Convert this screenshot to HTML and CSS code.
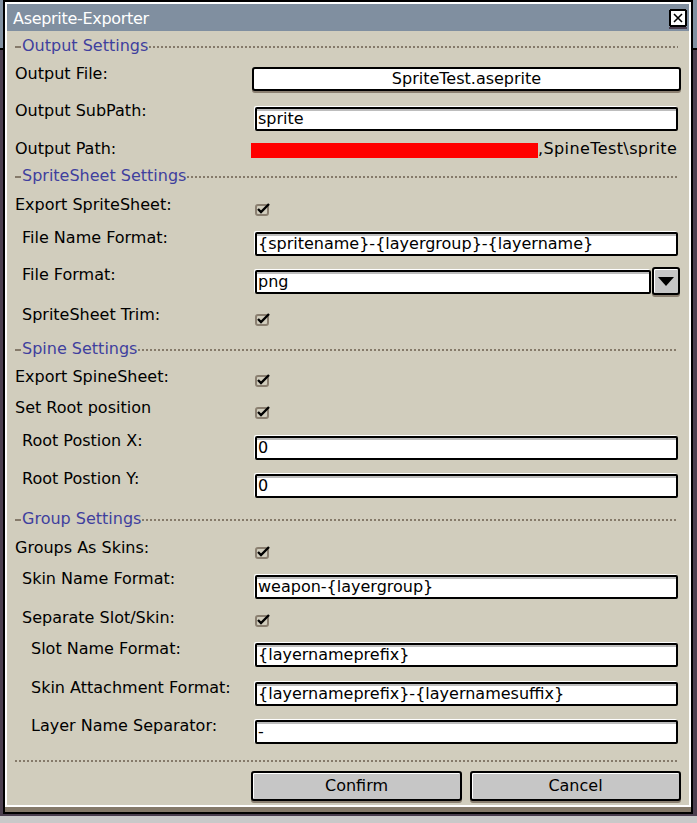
FILE: index.html
```html
<!DOCTYPE html>
<html>
<head>
<meta charset="utf-8">
<title>Aseprite-Exporter</title>
<link rel="stylesheet" href="styles.css">
</head>
<body>
<div class="window">
  <div class="inner">
    <div class="titlebar">
      <span class="title">Aseprite-Exporter</span>
      <span class="close">
        <svg width="18" height="20" viewBox="0 0 18 20" shape-rendering="crispEdges">
          <rect x="0" y="18" width="18" height="2" fill="#4b3f4f"/>
          <rect x="1" y="1" width="16" height="16" rx="2" fill="#fff" stroke="#000" stroke-width="2"/>
          <path d="M5 5 L13 13 M13 5 L5 13" stroke="#000" stroke-width="1.6" shape-rendering="auto"/>
        </svg>
      </span>
    </div>
    <div class="content">
      <div class="form">
        <div class="sep"><span class="dash lead"></span><span class="sep-text">Output Settings</span><span class="dash fill"></span></div>

        <div class="label">Output File:</div>
        <div class="ctl"><div class="filebtn">SpriteTest.aseprite</div></div>

        <div class="label">Output SubPath:</div>
        <div class="ctl"><div class="entry mt4">sprite</div></div>

        <div class="label">Output Path:</div>
        <div class="ctl"><div class="pathrow"><span class="redact"></span><span class="pathtext">,SpineTest\sprite</span></div></div>

        <div class="sep"><span class="dash lead"></span><span class="sep-text">SpriteSheet Settings</span><span class="dash fill"></span></div>

        <div class="label">Export SpriteSheet:</div>
        <div class="ctl"><span class="cb mt5"><svg width="17" height="15" viewBox="0 0 17 15"><rect x="1" y="3" width="12" height="10" rx="2" fill="none" stroke="#8a7f70" stroke-width="2"/><polyline points="3,7 6,10 14,2" fill="none" stroke="#000" stroke-width="2.4"/></svg></span></div>

        <div class="label l1">File Name Format:</div>
        <div class="ctl"><div class="entry mt2">{spritename}-{layergroup}-{layername}</div></div>

        <div class="label l1">File Format:</div>
        <div class="ctl"><div class="combo"><div class="entry mt3 combo-entry">png</div><div class="dd"><svg width="16" height="9" viewBox="0 0 16 9"><polygon points="0,0 16,0 8,9" fill="#000"/></svg></div></div></div>

        <div class="label l1">SpriteSheet Trim:</div>
        <div class="ctl"><span class="cb mt5"><svg width="17" height="15" viewBox="0 0 17 15"><rect x="1" y="3" width="12" height="10" rx="2" fill="none" stroke="#8a7f70" stroke-width="2"/><polyline points="3,7 6,10 14,2" fill="none" stroke="#000" stroke-width="2.4"/></svg></span></div>

        <div class="sep"><span class="dash lead"></span><span class="sep-text">Spine Settings</span><span class="dash fill"></span></div>

        <div class="label">Export SpineSheet:</div>
        <div class="ctl"><span class="cb mt4"><svg width="17" height="15" viewBox="0 0 17 15"><rect x="1" y="3" width="12" height="10" rx="2" fill="none" stroke="#8a7f70" stroke-width="2"/><polyline points="3,7 6,10 14,2" fill="none" stroke="#000" stroke-width="2.4"/></svg></span></div>

        <div class="label">Set Root position</div>
        <div class="ctl"><span class="cb mt5"><svg width="17" height="15" viewBox="0 0 17 15"><rect x="1" y="3" width="12" height="10" rx="2" fill="none" stroke="#8a7f70" stroke-width="2"/><polyline points="3,7 6,10 14,2" fill="none" stroke="#000" stroke-width="2.4"/></svg></span></div>

        <div class="label l1">Root Postion X:</div>
        <div class="ctl"><div class="entry mt3">0</div></div>

        <div class="label l1">Root Postion Y:</div>
        <div class="ctl"><div class="entry mt3">0</div></div>

        <div class="sep"><span class="dash lead"></span><span class="sep-text">Group Settings</span><span class="dash fill"></span></div>

        <div class="label">Groups As Skins:</div>
        <div class="ctl"><span class="cb mt5"><svg width="17" height="15" viewBox="0 0 17 15"><rect x="1" y="3" width="12" height="10" rx="2" fill="none" stroke="#8a7f70" stroke-width="2"/><polyline points="3,7 6,10 14,2" fill="none" stroke="#000" stroke-width="2.4"/></svg></span></div>

        <div class="label l1">Skin Name Format:</div>
        <div class="ctl"><div class="entry mt4">weapon-{layergroup}</div></div>

        <div class="label l1">Separate Slot/Skin:</div>
        <div class="ctl"><span class="cb mt3"><svg width="17" height="15" viewBox="0 0 17 15"><rect x="1" y="3" width="12" height="10" rx="2" fill="none" stroke="#8a7f70" stroke-width="2"/><polyline points="3,7 6,10 14,2" fill="none" stroke="#000" stroke-width="2.4"/></svg></span></div>

        <div class="label l2">Slot Name Format:</div>
        <div class="ctl"><div class="entry mt2">{layernameprefix}</div></div>

        <div class="label l2">Skin Attachment Format:</div>
        <div class="ctl"><div class="entry mt2">{layernameprefix}-{layernamesuffix}</div></div>

        <div class="label l2">Layer Name Separator:</div>
        <div class="ctl"><div class="entry mt2">-</div></div>
      </div>
      <div class="hr"></div>
      <div class="buttons">
        <div class="btn">Confirm</div>
        <div class="btn">Cancel</div>
      </div>
    </div>
  </div>
</div>
</body>
</html>
```

FILE: styles.css
```css
html, body {
  margin: 0;
  padding: 0;
}

body {
  width: 697px;
  height: 823px;
  overflow: hidden;
  font-family: "DejaVu Sans", sans-serif;
  font-size: 16px;
  line-height: 16px;
  color: #000;
  background: linear-gradient(to bottom, #8190a1 0 48px, #000 48px 50px, #4b3f4f 50px 816px, #c9c9c9 816px 823px);
}

.window {
  margin-left: 3px;
  width: 686px;
  border: 2px solid #000;
  background: #857a6a;
  padding-bottom: 5px;
}

.inner {
  border: 2px solid #fff;
  background: #d1cdbd;
}

.titlebar {
  height: 27px;
  background: #808fa0;
  display: flex;
  align-items: flex-start;
  padding-left: 6px;
}

.title {
  color: #fff;
  padding-top: 7px;
  letter-spacing: -0.3px;
}

.close {
  margin-left: auto;
  margin-right: 2px;
  margin-top: 5px;
  display: flex;
}

.content {
  padding: 7px 11px 4px 8px;
}

.form {
  display: grid;
  grid-template-columns: 240px 423px;
  grid-template-rows: 28px 37px 38px 27px 29px 33px 37px 40px 34px 28px 31px 33px 38px 40px 29px 31px 39px 31px 39px 38px 42px;
}

.sep {
  grid-column: 1 / -1;
  display: flex;
  align-items: flex-start;
  color: #3f3f9e;
}

.dash {
  height: 2px;
  margin-top: 8px;
  background: repeating-linear-gradient(to right, #857a6a 0 2px, transparent 2px 4px);
}

.dash.lead {
  width: 6px;
  margin-right: 1px;
  background: #857a6a;
}

.dash.fill {
  flex: 1;
  margin-left: 1px;
}

.label {
  white-space: nowrap;
}

.label.l1 {
  padding-left: 7px;
}

.label.l2 {
  padding-left: 16px;
}

.ctl {
  min-width: 0;
}

.entry {
  box-sizing: border-box;
  width: 423px;
  height: 24px;
  border: 2px solid #000;
  border-radius: 2px;
  background: #fff;
  box-shadow: inset 0 2px 0 #bdbdbd, -1px -1px 0 #fff;
  padding: 2px 0 0 1px;
  white-space: nowrap;
  overflow: hidden;
}

.mt2 { margin-top: 2px; }
.mt3 { margin-top: 3px; }
.mt4 { margin-top: 4px; }
.mt5 { margin-top: 5px; }

.filebtn {
  box-sizing: border-box;
  margin-left: -3px;
  margin-top: 1px;
  width: 429px;
  height: 24px;
  border: 2px solid #000;
  border-radius: 3px;
  background: #fff;
  box-shadow: 0 2px 0 #8a7f70;
  text-align: center;
  padding-top: 2px;
}

.pathrow {
  display: flex;
  margin-left: -4px;
}

.redact {
  width: 287px;
  height: 15px;
  margin-top: 2px;
  background: #ff0000;
}

.pathtext {
  white-space: nowrap;
  letter-spacing: 0.4px;
}

.cb {
  display: block;
  width: 17px;
  height: 15px;
}

.cb svg {
  display: block;
}

.combo {
  display: flex;
  align-items: flex-start;
  margin-right: -2px;
}

.combo-entry {
  width: 397px;
}

.dd {
  box-sizing: border-box;
  width: 28px;
  height: 28px;
  margin-left: 1px;
  border: 2px solid #000;
  border-radius: 3px;
  background: #c6c6c6;
  box-shadow: inset 1px 1px 0 #fff, 0 2px 0 #8a7f70;
  display: flex;
  align-items: center;
  justify-content: center;
}

.dd svg {
  display: block;
}

.hr {
  height: 2px;
  background: repeating-linear-gradient(to right, #857a6a 0 2px, transparent 2px 4px);
}

.buttons {
  display: flex;
  justify-content: flex-end;
  gap: 8px;
  margin-top: 9px;
  margin-right: -3px;
}

.btn {
  box-sizing: border-box;
  width: 211px;
  height: 30px;
  border: 2px solid #000;
  border-radius: 3px;
  background: #c6c6c6;
  box-shadow: inset 1px 1px 0 #fff, 0 2px 0 #8a7f70;
  display: flex;
  align-items: center;
  justify-content: center;
}
```
